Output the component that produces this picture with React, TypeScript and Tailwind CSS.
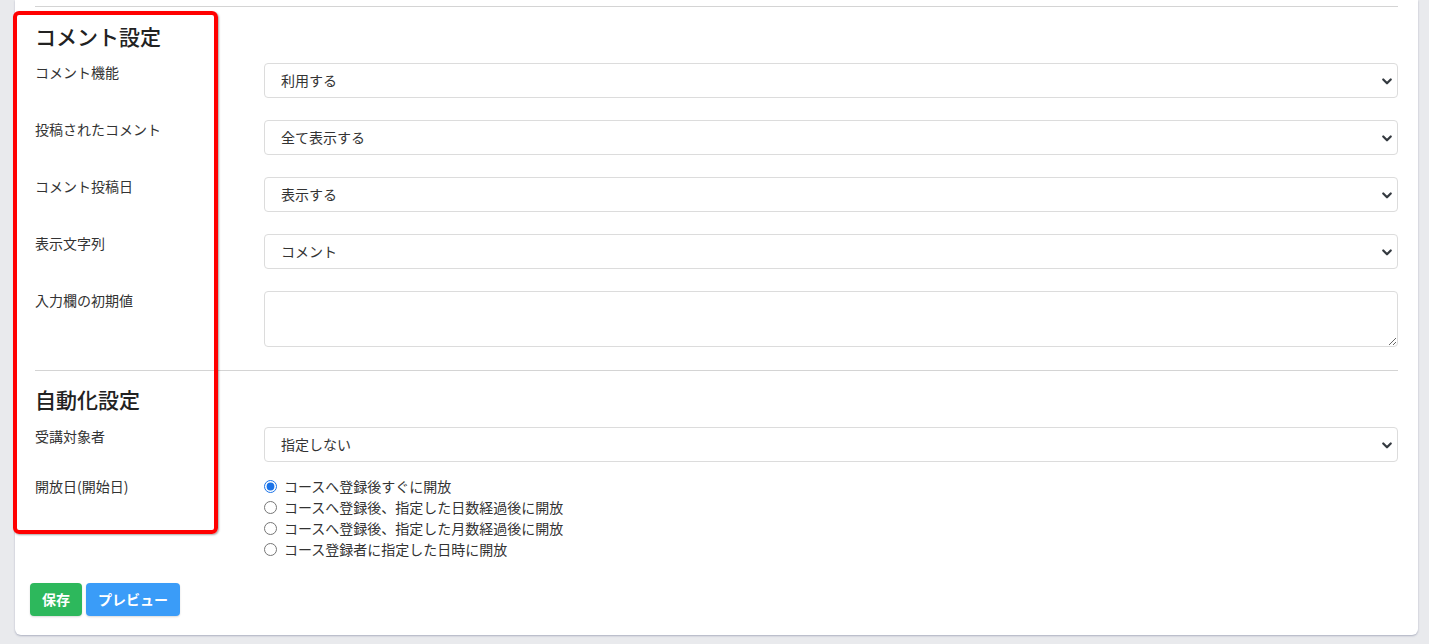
import React from 'react';

const font = { fontFamily: '"Noto Sans CJK JP", "Noto Sans", sans-serif' };

const Chevron = () => (
  <svg
    className="pointer-events-none absolute right-[5px] top-1/2 h-[12px] w-[12px] -translate-y-1/2"
    viewBox="0 0 16 16"
    fill="none"
    stroke="#343a40"
    strokeWidth="3"
    strokeLinecap="round"
    strokeLinejoin="round"
  >
    <path d="M3 6l5 5 5-5" />
  </svg>
);

const SelectRow: React.FC<{ label: string; value: string; className?: string }> = ({ label, value, className }) => (
  <div className={`flex items-start ${className ?? ''}`}>
    <label className="w-[229px] shrink-0 -mt-px text-[14px] leading-[21px] text-[#333]">{label}</label>
    <div className="relative flex-1">
      <select
        defaultValue={value}
        className="block h-[35px] w-full appearance-none rounded-[4px] border border-[#dcdcdc] bg-white pl-[16px] pr-8 text-[14px] text-[#333] outline-none"
        style={font}
      >
        <option>{value}</option>
      </select>
      <Chevron />
    </div>
  </div>
);

const radios = [
  'コースへ登録後すぐに開放',
  'コースへ登録後、指定した日数経過後に開放',
  'コースへ登録後、指定した月数経過後に開放',
  'コース登録者に指定した日時に開放',
];

export default function App() {
  return (
    <div className="relative h-[644px] overflow-hidden bg-[#e9eaed] pl-[15px] pr-[11px]" style={font}>
      <div className="rounded-b-[6px] bg-white pb-[19px] shadow-[0_1px_2px_rgba(60,70,110,0.35)]">
        <div className="px-[20px] pt-[6px]">
          <hr className="border-0 border-t border-[#d4d4d4]" />
          <h5 className="mt-[17px] text-[21px] font-medium leading-[24px] text-[#222]">コメント設定</h5>

          <SelectRow label="コメント機能" value="利用する" className="mt-[15px]" />
          <SelectRow label="投稿されたコメント" value="全て表示する" className="mt-[22px]" />
          <SelectRow label="コメント投稿日" value="表示する" className="mt-[22px]" />
          <SelectRow label="表示文字列" value="コメント" className="mt-[22px]" />

          <div className="mt-[22px] flex items-start">
            <label className="w-[229px] shrink-0 -mt-px text-[14px] leading-[21px] text-[#333]">入力欄の初期値</label>
            <textarea
              className="block h-[56px] flex-1 rounded-[4px] border border-[#dcdcdc] bg-white px-3 py-1.5 text-[14px] outline-none"
              style={font}
            />
          </div>

          <hr className="mt-[23px] border-0 border-t border-[#d4d4d4]" />
          <h5 className="mt-[16px] text-[21px] font-medium leading-[24px] text-[#222]">自動化設定</h5>

          <SelectRow label="受講対象者" value="指定しない" className="mt-[16px]" />

          <div className="mt-[14px] flex items-start">
            <label className="w-[229px] shrink-0 text-[14px] leading-[21px] text-[#333]">開放日(開始日)</label>
            <div className="flex flex-col">
              {radios.map((r, i) => (
                <label key={r} className="flex items-center text-[14px] leading-[21px] text-[#333]">
                  <input
                    type="radio"
                    name="open"
                    defaultChecked={i === 0}
                    className="m-0 h-[13px] w-[13px] accent-[#1a73e8]"
                  />
                  <span className="ml-[7px]">{r}</span>
                </label>
              ))}
            </div>
          </div>
        </div>

        <div className="mt-[23px] flex gap-[4px] px-[15px]">
          <button className="h-[33px] rounded-[4px] bg-[#2db85c] px-[12px] text-[14px] font-bold text-white shadow-[0_1px_2px_rgba(0,0,0,0.15)]">
            保存
          </button>
          <button className="h-[33px] rounded-[4px] bg-[#3a9cf8] px-[12px] text-[14px] font-bold text-white shadow-[0_1px_2px_rgba(0,0,0,0.15)]">
            プレビュー
          </button>
        </div>
      </div>

      {/* annotation box */}
      <div className="pointer-events-none absolute left-[13px] top-[11px] h-[523px] w-[205px] rounded-[6px] border-[4px] border-[#ff0000] shadow-[1px_1px_2px_rgba(0,0,0,0.35)]" />
    </div>
  );
}
